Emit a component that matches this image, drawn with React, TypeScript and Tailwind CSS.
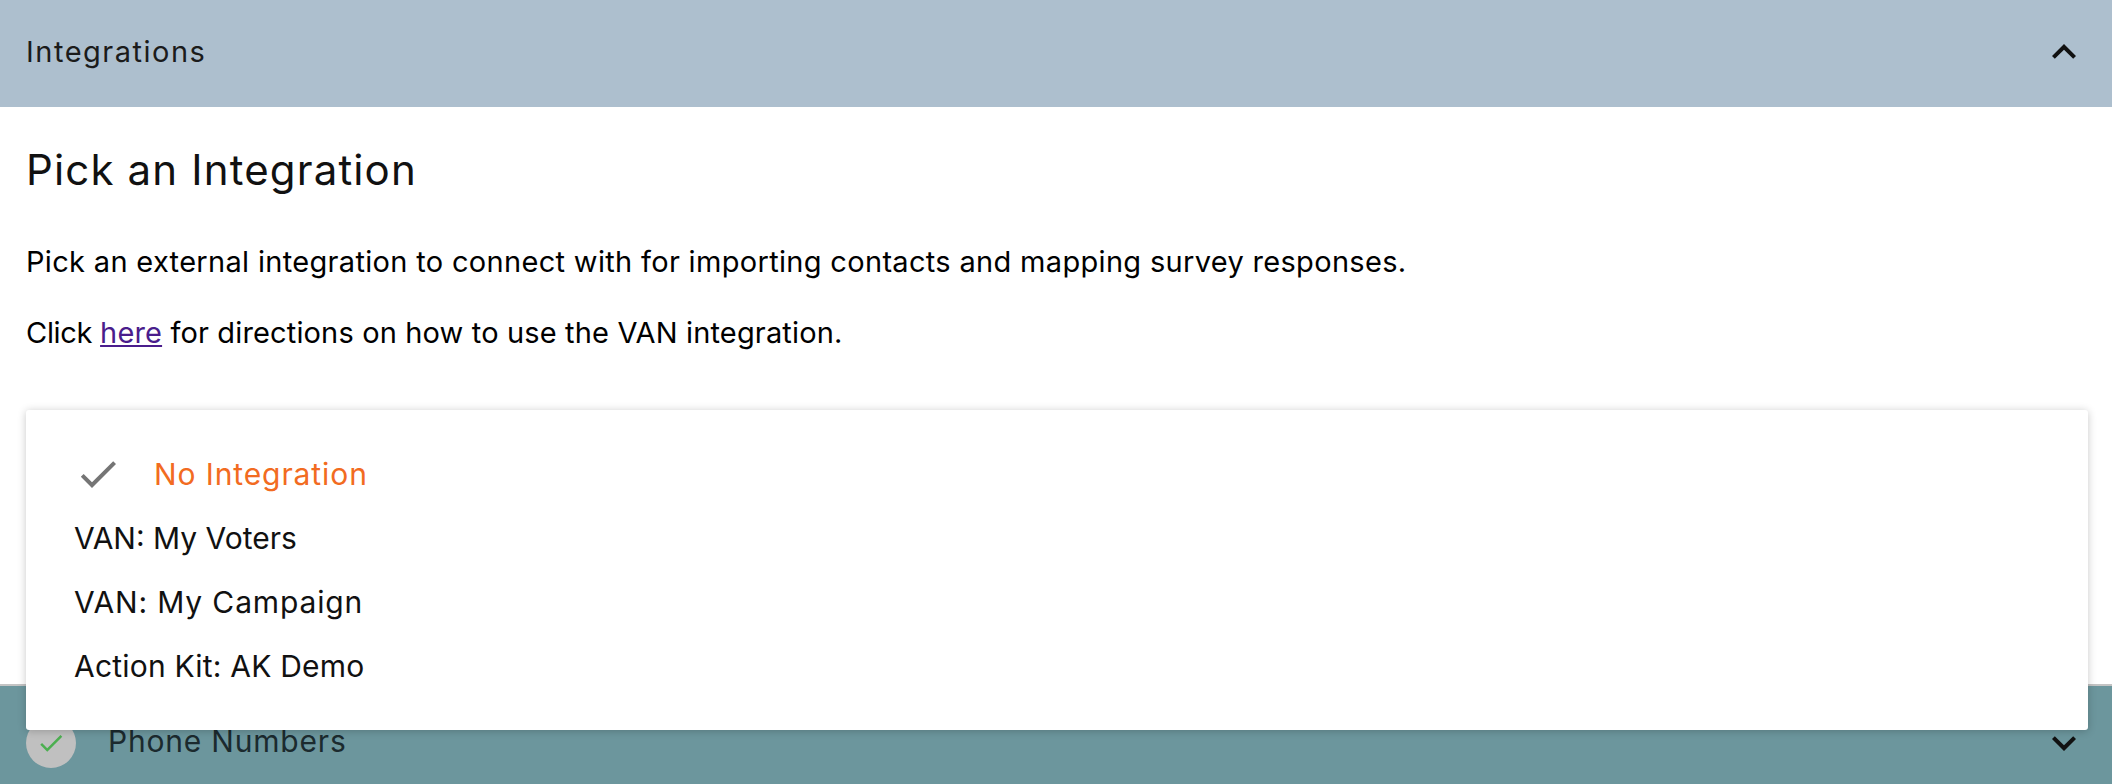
const options = [
  { label: "VAN: My Voters", spacing: "tracking-[0px]" },
  { label: "VAN: My Campaign", spacing: "tracking-[0.85px]" },
  { label: "Action Kit: AK Demo", spacing: "tracking-[0.2px]" },
];

function Chevron({ up }: { up?: boolean }) {
  return (
    <svg viewBox="0 0 24 24" className="h-12 w-12 shrink-0 fill-[#111]">
      <path d={up ? "M12 8l-6 6 1.41 1.41L12 10.83l4.59 4.58L18 14z" : "M16.59 8.59L12 13.17 7.41 8.59 6 10l6 6 6-6z"} />
    </svg>
  );
}

export default function App() {
  return (
    <div className="h-[784px] overflow-hidden bg-white font-['Inter',sans-serif] text-black">
      <header className="flex h-[107px] items-center justify-between bg-[#adbfce] pb-1 pl-[26px] pr-6">
        <span className="text-[29px] leading-none tracking-[1.5px] text-[#1b1b1b]">Integrations</span>
        <Chevron up />
      </header>

      <section className="relative z-10 h-[577px] pl-[26px] pr-6 pt-[40px]">
        <h1 className="text-[42px] leading-[46px] tracking-[1.15px] text-[#111]">Pick an Integration</h1>
        <p className="mt-[51px] text-[29px] leading-[36px] tracking-[0.32px]">
          Pick an external integration to connect with for importing contacts and mapping survey responses.
        </p>
        <p className="mt-[35px] text-[29px] leading-[36px] tracking-[0.15px]">
          <span className="tracking-[-0.3px]">Click </span>
          <a href="#" className="text-[#4a1d8c] underline">here</a> for directions on how to use the VAN integration.
        </p>

        <div className="mt-[59px] rounded-[3px] bg-white py-8 shadow-[0_1px_8px_rgba(0,0,0,0.22)]">
          <div className="flex h-16 items-center pl-12 text-[#f26b21]">
            <svg viewBox="0 0 24 24" className="h-12 w-12 shrink-0 fill-[#757575]">
              <path d="M9 16.17L4.83 12l-1.42 1.41L9 19 21 7l-1.41-1.41z" />
            </svg>
            <span className="ml-8 text-[30px] leading-none tracking-[0.9px]">No Integration</span>
          </div>
          {options.map((o) => (
            <div key={o.label} className={`flex h-16 items-center pl-12 text-[30px] leading-none text-[#111] ${o.spacing}`}>
              {o.label}
            </div>
          ))}
        </div>
      </section>

      <footer className="flex h-[100px] items-center justify-between border-t-2 border-[#c4c4c4] bg-[#6c969d] pl-[26px] pr-6 pt-4">
        <div className="flex items-center gap-8">
          <span className="grid h-[50px] w-[50px] place-items-center rounded-full bg-[#c0c0c0]">
            <svg viewBox="0 0 24 24" className="h-[30px] w-[30px] fill-[#4caf50]">
              <path d="M9 16.17L4.83 12l-1.42 1.41L9 19 21 7l-1.41-1.41z" />
            </svg>
          </span>
          <span className="mb-[5px] text-[30px] leading-none tracking-[0.8px] text-[#1b2a2e]">Phone Numbers</span>
        </div>
        <Chevron />
      </footer>
    </div>
  );
}
